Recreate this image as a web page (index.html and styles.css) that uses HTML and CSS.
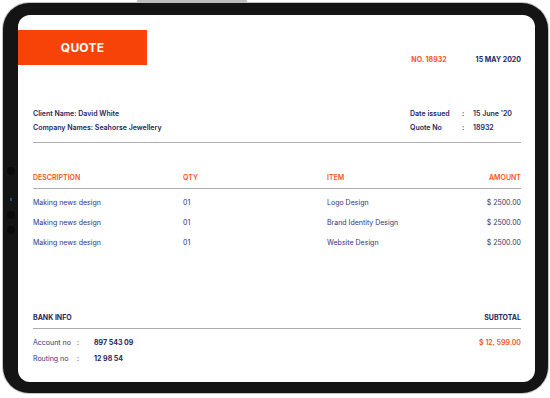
FILE: index.html
```html
<!DOCTYPE html>
<html>
<head>
<meta charset="utf-8">
<link rel="stylesheet" href="styles.css">
</head>
<body>
<div class="device">
  <span class="btn-top"></span>
  <span class="dot dot-a"></span>
  <span class="dot dot-b"></span>
  <span class="dot dot-c"></span>
  <span class="led"></span>
  <div class="screen">
    <div class="top">
      <div class="quote-tag">QUOTE</div>
      <div class="meta">
        <span class="accent">NO. 18932</span>
        <span>15 MAY 2020</span>
      </div>
    </div>
    <div class="body">
      <div class="info">
        <div class="client">
          <div>Client Name: David White</div>
          <div>Company Names: Seahorse Jewellery</div>
        </div>
        <div class="issued">
          <span>Date issued</span><span>:</span><span>15 June '20</span>
          <span>Quote No</span><span>:</span><span>18932</span>
        </div>
      </div>
      <div class="table">
        <div class="thead">
          <span>DESCRIPTION</span><span>QTY</span><span>ITEM</span><span class="r">AMOUNT</span>
        </div>
        <div class="row"><span>Making news design</span><span>01</span><span>Logo Design</span><span class="r">$ 2500.00</span></div>
        <div class="row"><span>Making news design</span><span>01</span><span>Brand Identity Design</span><span class="r">$ 2500.00</span></div>
        <div class="row"><span>Making news design</span><span>01</span><span>Website Design</span><span class="r">$ 2500.00</span></div>
      </div>
      <div class="bank">
        <div class="bank-head"><span>BANK INFO</span><span>SUBTOTAL</span></div>
        <div class="bank-body">
          <div class="acct">
            <span class="lbl">Account no</span><span class="lbl">:</span><span class="val">897 543 09</span>
            <span class="lbl">Routing no</span><span class="lbl">:</span><span class="val">12 98 54</span>
          </div>
          <div class="total">$ 12, 599.00</div>
        </div>
      </div>
    </div>
  </div>
</div>
</body>
</html>
```

FILE: styles.css
```css
* { box-sizing: border-box; }
html, body { margin: 0; padding: 0; background: #fff; }
body {
  font-family: Inter, "Noto Sans", "Liberation Sans", sans-serif;
  color: #27265e;
  width: 550px;
  height: 398px;
  overflow: hidden;
}
.device {
  position: relative;
  margin: 3px 0 0 3px;
  width: 545px;
  height: 390px;
  background: #141414;
  border-radius: 26px;
  box-shadow: 0 0 0 1px #c4c4c4;
  padding: 12px 13px 11px 15px;
}
.btn-top {
  position: absolute;
  top: -3px;
  left: 134px;
  width: 110px;
  height: 3px;
  background: #bdbdbd;
  border-radius: 1px 1px 0 0;
}
.dot {
  position: absolute;
  left: 4px;
  width: 8px;
  height: 8px;
  border-radius: 50%;
  background: #0a0a0a;
}
.dot-a { top: 164px; }
.dot-b { top: 208px; }
.dot-c { top: 223px; }
.led {
  position: absolute;
  left: 7px;
  top: 195px;
  width: 2px;
  height: 3px;
  background: #2a4a8a;
}
.screen {
  background: #fff;
  border-radius: 12px;
  height: 367px;
  overflow: hidden;
}
.top {
  display: flex;
  align-items: flex-end;
  padding-top: 15px;
}
.quote-tag {
  width: 129px;
  height: 35px;
  background: #f74308;
  color: #fff;
  font-weight: 700;
  font-size: 12px;
  letter-spacing: 0.2px;
  display: flex;
  align-items: center;
  justify-content: center;
}
.meta {
  margin-left: auto;
  padding-right: 14px;
  display: flex;
  gap: 29px;
  font-size: 7px;
  font-weight: 700;
  line-height: 10px;
}
.accent { color: #f7541a; }
.body {
  padding: 0 14px 0 15px;
  font-size: 7px;
}
.info {
  display: flex;
  justify-content: space-between;
  margin-top: 42px;
  padding-bottom: 7px;
  border-bottom: 1px solid #adadad;
  font-weight: 600;
  line-height: 14px;
}
.issued {
  display: grid;
  grid-template-columns: 52px 11px 48px;
}
.table { margin-top: 29px; }
.thead {
  display: grid;
  grid-template-columns: 150px 144px 1fr auto;
  color: #f7541a;
  font-weight: 600;
  line-height: 12px;
  padding-bottom: 4px;
  border-bottom: 1px solid #adadad;
  margin-bottom: 4px;
}
.row {
  display: grid;
  grid-template-columns: 150px 144px 1fr auto;
  line-height: 20px;
  color: #34337a;
}
.r { text-align: right; }
.bank { margin-top: 59px; }
.bank-head {
  display: flex;
  justify-content: space-between;
  font-weight: 700;
  line-height: 12px;
  padding-bottom: 4px;
  border-bottom: 1px solid #adadad;
}
.bank-body {
  display: flex;
  justify-content: space-between;
  margin-top: 6px;
  line-height: 16px;
}
.acct {
  display: grid;
  grid-template-columns: 44px 17px auto;
}
.lbl { color: #34337a; }
.val { font-weight: 700; }
.total {
  color: #f7541a;
  font-weight: 600;
}
```
